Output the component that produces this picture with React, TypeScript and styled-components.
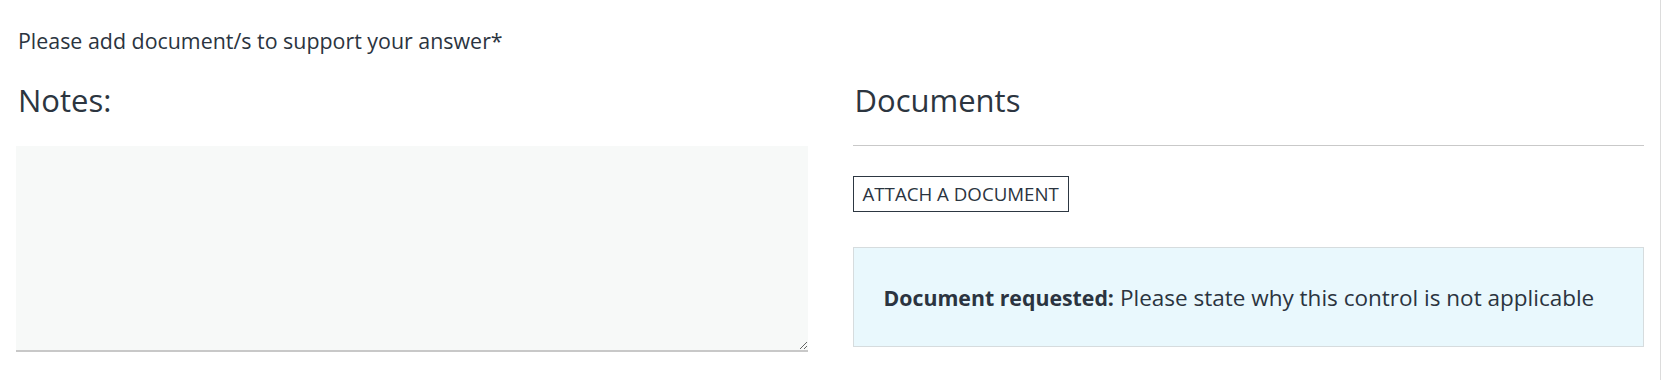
import React, { FC } from 'react';
import styled, { createGlobalStyle } from 'styled-components';

const GlobalStyle = createGlobalStyle`
  html, body {
    margin: 0;
    padding: 0;
    background: #ffffff;
  }
  body {
    font-family: 'Open Sans', 'Noto Sans', sans-serif;
    color: #2b3440;
  }
  * {
    box-sizing: border-box;
  }
`;

const Page = styled.div`
  min-height: 380px;
  border-right: 1px solid #dcdcdc;
  padding: 27px 16px 0 16px;
`;

const Intro = styled.p`
  margin: 0 0 0 2px;
  font-size: 21.4px;
  line-height: 28px;
  color: #2b3440;
`;

const Columns = styled.div`
  display: grid;
  grid-template-columns: 1fr 1fr;
  column-gap: 45px;
  margin-top: 25px;
`;

const Column = styled.section`
  display: flex;
  flex-direction: column;
`;

const Heading = styled.h2<{ divider?: boolean }>`
  margin: 0;
  padding: 0 0 ${({ divider }) => (divider ? '25px' : '26px')} 2px;
  font-size: 31px;
  font-weight: 400;
  line-height: 40px;
  color: #2c3540;
  border-bottom: ${({ divider }) => (divider ? '1px solid #c9c9c9' : 'none')};
`;

const NotesField = styled.textarea`
  display: block;
  width: 100%;
  height: 206px;
  margin: 0;
  padding: 12px;
  border: none;
  border-bottom: 2px solid #c8c8c8;
  background: #f7f9f8;
  font-family: inherit;
  font-size: 18px;
  color: #2b3440;
  resize: vertical;
  outline: none;
`;

const AttachButton = styled.button`
  align-self: flex-start;
  height: 36px;
  margin-top: 30px;
  padding: 0 9px;
  border: 1px solid #2d3742;
  background: #ffffff;
  font-family: inherit;
  font-size: 18.7px;
  line-height: 34px;
  color: #2b3440;
  text-transform: uppercase;
  cursor: pointer;
`;

const InfoBox = styled.div`
  display: flex;
  align-items: center;
  height: 100px;
  margin-top: 35px;
  padding: 2px 30px 0 30px;
  background: #e9f8fd;
  border: 1px solid #d6dcde;
  font-size: 22.5px;
  line-height: 28px;
  color: #2b3440;
`;

const Label = styled.strong`
  font-size: 21.3px;
  font-weight: 700;
  margin-right: 6px;
`;

const App: FC = () => {
  return (
    <>
      <GlobalStyle />
      <Page>
        <Intro>Please add document/s to support your answer*</Intro>
        <Columns>
          <Column>
            <Heading>Notes:</Heading>
            <NotesField aria-label="Notes" />
          </Column>
          <Column>
            <Heading divider>Documents</Heading>
            <AttachButton type="button">Attach a document</AttachButton>
            <InfoBox>
              <span>
                <Label>Document requested:</Label>
                Please state why this control is not applicable
              </span>
            </InfoBox>
          </Column>
        </Columns>
      </Page>
    </>
  );
};

export default App;
